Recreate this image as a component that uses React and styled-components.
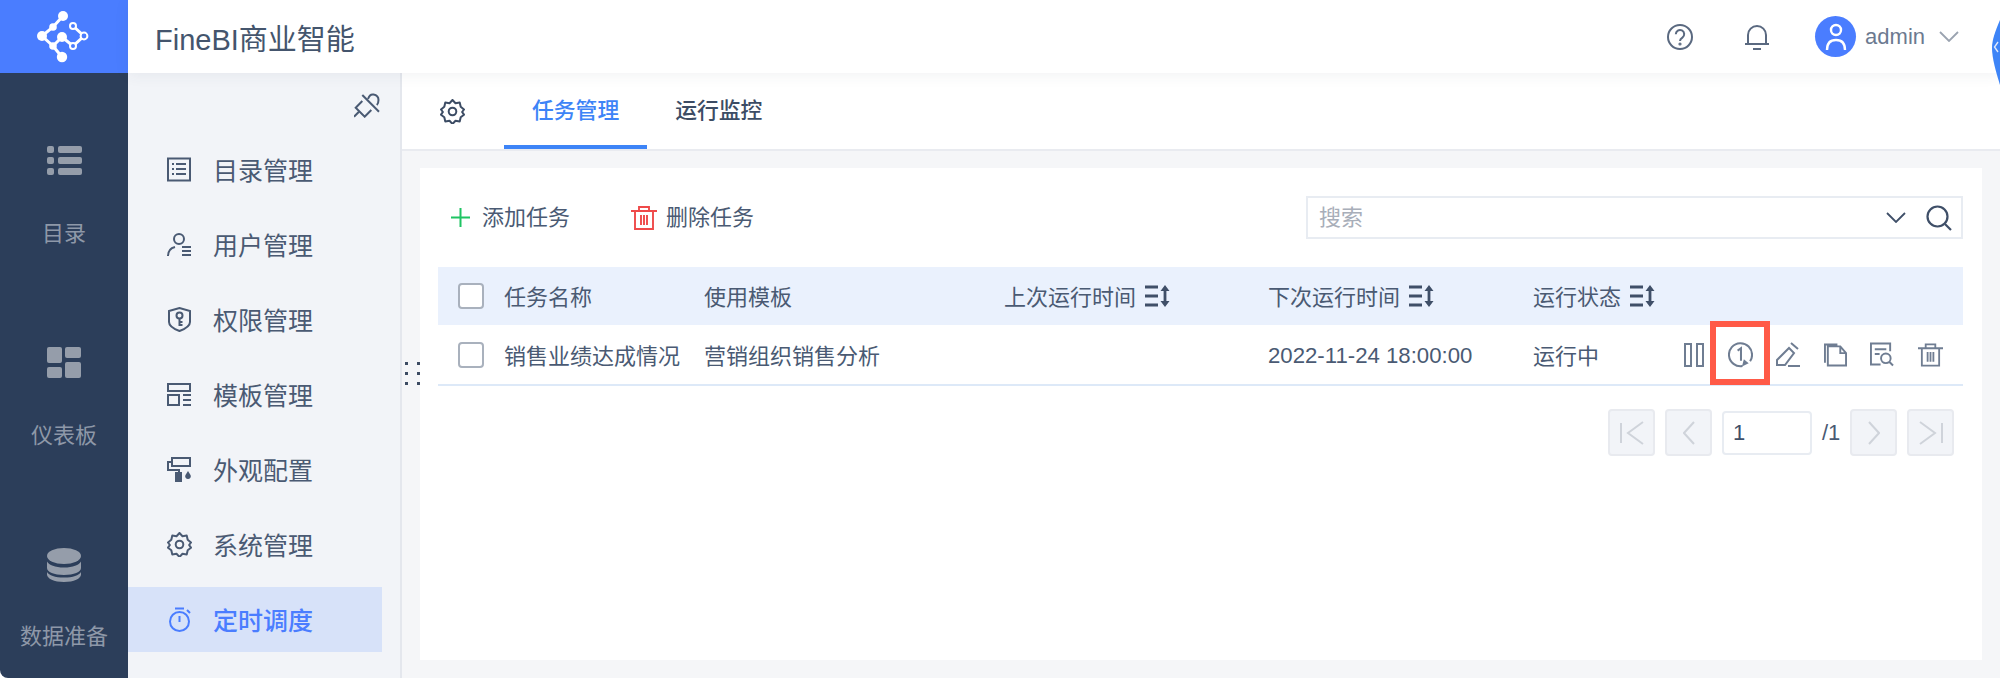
import React from "react";
import styled, { createGlobalStyle } from "styled-components";

const Global = createGlobalStyle`
  html, body { margin: 0; padding: 0; height: 100%; overflow: hidden; background: #fff; }
  body { font-family: "Liberation Sans", "Noto Sans CJK SC", sans-serif; color: #4a5a73; }
  #root { height: 100%; }
  * { box-sizing: border-box; }
  svg { display: block; flex: none; }
`;

const Page = styled.div`
  position: relative;
  width: 2000px;
  height: 678px;
  display: grid;
  grid-template-columns: 128px 1fr;
  grid-template-rows: 73px 1fr;
  overflow: hidden;
`;
const Logo = styled.div`background: #4a7dff;`;
const Header = styled.header`
  position: relative;
  z-index: 2;
  background: #fff;
  display: flex;
  align-items: center;
  padding: 0 41px 0 27px;
  box-shadow: 0 2px 14px rgba(60, 70, 90, 0.07);
`;
const Title = styled.div`font-size: 29px; color: #44556d; flex: 1;`;
const HeadIcons = styled.div`display: flex; align-items: center; gap: 51px;`;
const User = styled.div`display: flex; align-items: center; margin-left: 46px;`;
const Avatar = styled.div`
  width: 41px; height: 41px; border-radius: 50%; background: #4a7dff;
  display: flex; align-items: center; justify-content: center; margin-right: 9px;
`;
const UserName = styled.span`font-size: 22px; color: #6c7a90; margin-right: 14px;`;
const SideTab = styled.svg`position: absolute; right: 0; top: 20px; z-index: 3;`;

const Rail = styled.nav`
  background: #2c3e5a;
  border-bottom-left-radius: 8px;
  display: flex;
  flex-direction: column;
`;
const RailItem = styled.div`
  height: 201px;
  display: flex;
  flex-direction: column;
  align-items: center;
  padding-top: ${p => p.$top}px;
`;
const RailLabel = styled.div`
  font-size: 22px; line-height: 30px; color: #8e98a8; margin-top: ${p => p.$gap}px;
`;

const Body = styled.div`display: grid; grid-template-columns: 274px 1fr; min-height: 0;`;
const NavPanel = styled.aside`
  background: #f2f4f8;
  border-right: 2px solid #e4e7ed;
  padding-right: 18px;
  display: flex;
  flex-direction: column;
`;
const PinRow = styled.div`
  height: 64px; display: flex; justify-content: flex-end; padding: 19px 2px 0 0;
`;
const NavList = styled.div`display: flex; flex-direction: column; gap: 10px;`;
const NavItem = styled.div`
  height: 65px;
  display: flex;
  align-items: center;
  gap: 21px;
  padding-left: 39px;
  font-size: 25px;
  color: ${p => (p.$active ? "#4a7dff" : "#4a5a73")};
  font-weight: ${p => (p.$active ? 500 : 400)};
  background: ${p => (p.$active ? "#d7e2f9" : "transparent")};
`;
const NavText = styled.span`margin-bottom: 2px;`;

const Main = styled.main`
  position: relative;
  background: #f5f6f8;
  display: flex;
  flex-direction: column;
  padding-bottom: 18px;
`;
const Grip = styled.div`
  position: absolute; left: 3px; top: 289px;
  display: grid; grid-template-columns: repeat(2, 3px); gap: 7px 9px;
`;
const GripDot = styled.i`display: block; width: 3px; height: 3px; background: #3d4c63;`;
const Tabs = styled.div`
  height: 78px; background: #fff; border-bottom: 2px solid #e9ebf0;
  display: flex; align-items: center; padding-left: 38px;
`;
const TabList = styled.div`display: flex; align-self: stretch; margin-left: 39px;`;
const Tab = styled.div`
  font-size: 21.8px;
  font-weight: 500;
  padding: 0 28px 2px;
  display: flex;
  align-items: center;
  height: 76px;
  color: ${p => (p.$active ? "#3d84f7" : "#3c4c64")};
  border-bottom: 4px solid ${p => (p.$active ? "#3d84f7" : "transparent")};
`;
const Card = styled.section`
  flex: 1;
  margin: 17px 18px 0;
  background: #fff;
  padding: 0 19px 0 18px;
`;
const Toolbar = styled.div`
  height: 99px;
  display: flex;
  align-items: center;
  justify-content: space-between;
`;
const Actions = styled.div`display: flex; align-items: center;`;
const ToolButton = styled.div`
  display: flex; align-items: center; font-size: 22px; color: #4a5a73;
  gap: ${p => p.$gap}px; margin-left: ${p => p.$left}px;
`;
const ToolText = styled.span`margin-bottom: 5px;`;
const Search = styled.div`
  width: 657px; height: 43px; border: 2px solid #e8ecf2;
  display: flex; align-items: center; padding: 0 9px 0 11px;
  font-size: 22px; color: #a8aeb9;
`;
const SearchText = styled.span`flex: 1; margin-bottom: 6px;`;
const SearchChevron = styled.span`margin-right: 20px;`;

const Row = styled.div`
  display: grid;
  grid-template-columns: 66px 200px 300px 264px 265px 1fr;
  align-items: center;
  font-size: 22px;
  color: #4a5a73;
  height: ${p => p.$h}px;
  background: ${p => (p.$head ? "#eaf1fd" : "#fff")};
  border-bottom: ${p => (p.$head ? "none" : "2px solid #dde9f8")};
`;
const CheckCell = styled.div`padding-left: 20px;`;
const Check = styled.div`
  width: 26px; height: 26px; border: 2px solid #a9b1bd; border-radius: 4px; background: #fff;
`;
const CellText = styled.span`display: block; margin-bottom: 2px; white-space: nowrap;`;
const SortCell = styled.div`display: flex; align-items: center; gap: 9px; white-space: nowrap;`;
const DateText = styled.div`font-size: 22.2px; padding-top: 2px;`;
const StatusCell = styled.div`
  display: grid;
  grid-template-columns: auto 1fr;
  align-items: center;
`;
const RowActions = styled.div`
  display: flex; align-items: center; justify-content: flex-end; padding-right: 20px; gap: 23.6px;
`;
const ActionIcon = styled.span`position: relative; display: block;`;
const Highlight = styled.i`
  position: absolute; left: -18px; top: -21px; width: 60px; height: 64px;
  border: 6px solid #ff5a47; pointer-events: none;
`;
const Pager = styled.div`
  display: flex; justify-content: flex-end; align-items: center; gap: 10px;
  padding: 23px 9px 0 0;
`;
const PageButton = styled.div`
  width: 47px; height: 47px; background: #f2f4f8; border: 2px solid #e8eaef; border-radius: 4px;
  display: flex; align-items: center; justify-content: center;
`;
const PageInput = styled.div`
  width: 90px; height: 44px; border: 2px solid #e8ecf2; border-radius: 4px;
  font-size: 22px; color: #3f4f68; display: flex; align-items: center; padding-left: 9px;
`;
const PageTotal = styled.span`font-size: 22px; color: #4a5a73; width: 18px;`;

const INK = "#4a5a73";
const ACT = "#6f7d92";

const LogoMark = () => (
  <svg width="128" height="73" viewBox="0 0 128 73">
    <g stroke="#fff" strokeWidth="3" fill="none">
      <path d="M63 16L53 27L42 36L53 46L62 57M53 46L62 37L73 46L84 36L73 26" />
    </g>
    <g fill="#fff">
      <circle cx="63" cy="16" r="5" /><circle cx="53" cy="27" r="3.800" /><circle cx="42" cy="36" r="5" />
      <circle cx="53" cy="46" r="3.800" /><circle cx="62" cy="57" r="5.200" /><circle cx="62" cy="37" r="5" />
    </g>
    <g fill="#4a7dff" stroke="#fff" strokeWidth="2">
      <circle cx="73" cy="26" r="3" /><circle cx="84" cy="36" r="3.400" /><circle cx="73" cy="46" r="3" />
    </g>
  </svg>
);
const Help = () => (
  <svg width="28" height="28" viewBox="0 0 28 28" fill="none" stroke="#5a6980" strokeWidth="2">
    <circle cx="14" cy="14" r="12" />
    <path d="M9.800 11.200a4.200 4.200 0 1 1 6.600 3.400c-1.500 1-2.400 1.700-2.400 3.400" />
    <circle cx="14" cy="21" r=".6" fill="#5a6980" />
  </svg>
);
const Bell = () => (
  <svg width="24" height="26" viewBox="0 0 24 26" fill="none" stroke="#5a6980" strokeWidth="2">
    <path d="M3 19V11a9 9 0 0 1 18 0v8" />
    <path d="M0 20h24M8 25h8" />
  </svg>
);
const AvatarFace = () => (
  <svg width="22" height="28" viewBox="0 0 22 28" fill="none" stroke="#fff" strokeWidth="2.400">
    <circle cx="11" cy="7" r="5" />
    <path d="M2 27c0-7 3.500-10 9-10s9 3 9 10" />
  </svg>
);
const Chevron = ({ c = "#9aa3b0" }) => (
  <svg width="20" height="11" viewBox="0 0 20 11" fill="none" stroke={c} strokeWidth="1.800">
    <path d="M1 1l9 9 9-9" />
  </svg>
);
const RailList = () => (
  <svg width="35" height="30" viewBox="0 0 35 30" fill="#959daa">
    <rect x="0" y="0" width="7" height="7" rx="2" /><rect x="11" y="0" width="24" height="7" rx="2" />
    <rect x="0" y="11" width="7" height="7" rx="2" /><rect x="11" y="11" width="24" height="7" rx="2" />
    <rect x="0" y="22" width="7" height="7" rx="2" /><rect x="11" y="22" width="24" height="7" rx="2" />
  </svg>
);
const RailDash = () => (
  <svg width="34" height="31" viewBox="0 0 34 31" fill="#959daa">
    <rect x="0" y="0" width="15" height="16" rx="2" /><rect x="18" y="0" width="16" height="11" rx="2" />
    <rect x="0" y="20" width="15" height="11" rx="2" /><rect x="18" y="15" width="16" height="16" rx="2" />
  </svg>
);
const RailDb = () => (
  <svg width="34" height="34" viewBox="0 0 34 34" fill="#959daa">
    <ellipse cx="17" cy="8" rx="17" ry="8" />
    <path d="M0 13.500c2 3.500 8 6 17 6s15-2.500 17-6V20c0 4-7 7-17 7S0 24 0 20z" />
    <path d="M0 24c2 3.500 8 5.500 17 5.500S32 27.500 34 24v2.500C34 30.500 27 34 17 34S0 30.500 0 26.500z" />
  </svg>
);
const Pin = () => (
  <svg width="26" height="26" viewBox="0 0 26 26" fill="none" stroke={INK} strokeWidth="2">
    <path d="M8.300 3L25 19.700" />
    <path d="M14 7c1-3 3-5 5.500-4.500 3 .6 5 3 5 5.500 0 2-.7 4-1.700 5" />
    <path d="M8.300 9L1.700 15.700 10.700 24.700 17.300 18" />
    <path d="M5 19.700L0 24.700" />
  </svg>
);
const NavIcon = ({ children }) => (
  <svg width="25" height="25" viewBox="0 0 25 25" fill="none" stroke="currentColor" strokeWidth="2">{children}</svg>
);
const GEAR = "M12.500 1l3 3.200 4.200-.6 1 4.200 3.300 2.700-1.900 2.500 1.900 2.700-3.300 2.500-1 4.200-4.200-.6-3 3.200-3-3.200-4.200.6-1-4.200L1 15.700 2.900 13 1 10.500l3.300-2.700 1-4.200 4.200.6z";
const navIcons = [
  <NavIcon key="a"><rect x="1" y="1.500" width="22" height="22" /><path d="M5 7h2M9 7h10M5 12h2M9 12h10M5 17h2M9 17h10" /></NavIcon>,
  <NavIcon key="b"><circle cx="12" cy="7" r="5" /><path d="M1 24c0-5 3-8 7-9M15 15h9M15 19h9M15 23h9" /></NavIcon>,
  <NavIcon key="c"><path d="M2 4l10.500-3L23 4v11c0 4-5 7-10.500 9C7 22 2 19 2 15z" /><circle cx="12.500" cy="8.500" r="3" /><path d="M12.500 11.500V19M12.500 15h3M12.500 18h3" /></NavIcon>,
  <NavIcon key="d"><path d="M1 2h22v7H1zM1 13h11v10H1zM16 13h8M16 18h8M16 23h8" /></NavIcon>,
  <NavIcon key="e"><path d="M5 5H1v8h11v3M5 1h18v8H5z" /><rect x="9" y="16" width="5" height="9" fill="currentColor" /><path d="M21 14l2.500 4a2.800 2.800 0 1 1-5 0z" fill="currentColor" stroke="none" /></NavIcon>,
  <NavIcon key="f"><path d={GEAR} strokeLinejoin="round" /><circle cx="12.500" cy="12.500" r="3.800" /></NavIcon>,
  <NavIcon key="g"><circle cx="12.500" cy="14.500" r="9.500" /><path d="M8 1.500h9M12.500 9v6M20 3l3 3" /></NavIcon>,
];
const Gear = () => (
  <svg width="25" height="25" viewBox="0 0 25 25" fill="none" stroke="#3c4c64" strokeWidth="2" strokeLinejoin="round">
    <path d={GEAR} />
    <circle cx="12.500" cy="12.500" r="3.800" />
  </svg>
);
const Plus = () => (
  <svg width="19" height="19" viewBox="0 0 19 19" stroke="#1fc463" strokeWidth="2"><path d="M9.500 0v19M0 9.500h19" /></svg>
);
const Trash = ({ c, w = 26, h = 24 }) => (
  <svg width={w} height={h} viewBox="0 0 26 24" fill="none" stroke={c} strokeWidth="1.900">
    <path d="M0 5h26M8 5V1h10v4M4 5v18h18V5M10 9v10M13 9v10M16 9v10" />
  </svg>
);
const SearchIcon = () => (
  <svg width="26" height="26" viewBox="0 0 26 26" fill="none" stroke="#3f4f68" strokeWidth="2.200">
    <circle cx="11.500" cy="11.500" r="10" /><path d="M19 19l6 6" />
  </svg>
);
const Sort = () => (
  <svg width="25" height="22" viewBox="0 0 25 22" fill="none" stroke="#3f4f68" strokeWidth="2.800">
    <path d="M0 2h13M0 11h13M0 20h13M20 4v14" />
    <path d="M15.500 6l4.500-6 4.500 6zM15.500 16l4.500 6 4.500-6z" fill="#3f4f68" stroke="none" />
  </svg>
);
const Pause = () => (
  <svg width="20" height="24" viewBox="0 0 20 24" fill="none" stroke={ACT} strokeWidth="2"><rect x="1" y="1" width="6" height="22" /><rect x="13" y="1" width="6" height="22" /></svg>
);
const Once = () => (
  <svg width="25" height="26" viewBox="0 0 26 26" fill="none" stroke={ACT} strokeWidth="2.100">
    <path d="M15 24.500A12 12 0 1 1 25 13c0 2.500-.6 4.500-2 6.500" />
    <path d="M10 8.500L13.500 6v13" />
    <path d="M14.500 25l2-7.500 5 4z" fill={ACT} stroke="none" />
  </svg>
);
const Edit = () => (
  <svg width="24" height="25" viewBox="0 0 24 25" fill="none" stroke={ACT} strokeWidth="2">
    <path d="M1 18l12-12 5 5-9 12H1zM15 1l7 6M12 24h12" />
  </svg>
);
const Copy = () => (
  <svg width="23" height="24" viewBox="0 0 24 24" fill="none" stroke={ACT} strokeWidth="2">
    <path d="M4 3v20h19V10l-6-7zM17 3v7h6M1 20V1h13" />
  </svg>
);
const Review = () => (
  <svg width="24" height="25" viewBox="0 0 25 25" fill="none" stroke={ACT} strokeWidth="2">
    <path d="M21 9V1H1v22h10M5 7h12M5 12h5" />
    <circle cx="16.500" cy="16.500" r="5" /><path d="M20 20l4 4" />
  </svg>
);
const First = () => (
  <svg width="24" height="24" viewBox="0 0 24 24" fill="none" stroke="#cfd3da" strokeWidth="2"><path d="M1 2v20M23 1L8 12l15 11" /></svg>
);
const Last = () => (
  <svg width="24" height="24" viewBox="0 0 24 24" fill="none" stroke="#cfd3da" strokeWidth="2"><path d="M23 2v20M1 1l15 11L1 23" /></svg>
);
const Prev = () => (
  <svg width="12" height="24" viewBox="0 0 12 24" fill="none" stroke="#cfd3da" strokeWidth="2"><path d="M11 1L1 12l10 11" /></svg>
);
const Next = () => (
  <svg width="12" height="24" viewBox="0 0 12 24" fill="none" stroke="#cfd3da" strokeWidth="2"><path d="M1 1l10 11L1 23" /></svg>
);

const navs = ["目录管理", "用户管理", "权限管理", "模板管理", "外观配置", "系统管理", "定时调度"];

export default function App() {
  return (
    <Page>
      <Global />
      <Logo><LogoMark /></Logo>
      <Header>
        <Title>FineBI商业智能</Title>
        <HeadIcons>
          <Help />
          <Bell />
        </HeadIcons>
        <User>
          <Avatar><AvatarFace /></Avatar>
          <UserName>admin</UserName>
          <Chevron />
        </User>
      </Header>
      <SideTab width="10" height="70" viewBox="0 0 10 70">
        <path d="M10 0C5 12 2 20 2 28c0 10 4 24 8 37z" fill="#3d84f7" />
        <path d="M8 22l-3.500 5 3.500 5" stroke="#dfe9fb" strokeWidth="1.400" fill="none" />
      </SideTab>
      <Rail>
        <RailItem $top={73}><RailList /><RailLabel $gap={43}>目录</RailLabel></RailItem>
        <RailItem $top={73}><RailDash /><RailLabel $gap={43}>仪表板</RailLabel></RailItem>
        <RailItem $top={73}><RailDb /><RailLabel $gap={40}>数据准备</RailLabel></RailItem>
      </Rail>
      <Body>
        <NavPanel>
          <PinRow><Pin /></PinRow>
          <NavList>
            {navs.map((n, i) => (
              <NavItem key={n} $active={i === 6}>{navIcons[i]}<NavText>{n}</NavText></NavItem>
            ))}
          </NavList>
        </NavPanel>
        <Main>
          <Grip>{Array.from({ length: 6 }, (_, i) => <GripDot key={i} />)}</Grip>
          <Tabs>
            <Gear />
            <TabList>
              <Tab $active>任务管理</Tab>
              <Tab>运行监控</Tab>
            </TabList>
          </Tabs>
          <Card>
            <Toolbar>
              <Actions>
                <ToolButton $gap={12} $left={13}><Plus /><ToolText>添加任务</ToolText></ToolButton>
                <ToolButton $gap={9} $left={61}><Trash c="#ef4a4a" /><ToolText>删除任务</ToolText></ToolButton>
              </Actions>
              <Search>
                <SearchText>搜索</SearchText>
                <SearchChevron><Chevron c="#3f4f68" /></SearchChevron>
                <SearchIcon />
              </Search>
            </Toolbar>
            <Row $head $h={58}>
              <CheckCell><Check /></CheckCell>
              <CellText>任务名称</CellText>
              <CellText>使用模板</CellText>
              <SortCell><CellText>上次运行时间</CellText><Sort /></SortCell>
              <SortCell><CellText>下次运行时间</CellText><Sort /></SortCell>
              <SortCell><CellText>运行状态</CellText><Sort /></SortCell>
            </Row>
            <Row $h={61}>
              <CheckCell><Check /></CheckCell>
              <CellText>销售业绩达成情况</CellText>
              <CellText>营销组织销售分析</CellText>
              <div />
              <DateText>2022-11-24 18:00:00</DateText>
              <StatusCell>
                <CellText>运行中</CellText>
                <RowActions>
                  <ActionIcon><Pause /></ActionIcon>
                  <ActionIcon><Once /><Highlight /></ActionIcon>
                  <ActionIcon><Edit /></ActionIcon>
                  <ActionIcon><Copy /></ActionIcon>
                  <ActionIcon><Review /></ActionIcon>
                  <ActionIcon><Trash c={ACT} w={25} h={24} /></ActionIcon>
                </RowActions>
              </StatusCell>
            </Row>
            <Pager>
              <PageButton><First /></PageButton>
              <PageButton><Prev /></PageButton>
              <PageInput>1</PageInput>
              <PageTotal>/1</PageTotal>
              <PageButton><Next /></PageButton>
              <PageButton><Last /></PageButton>
            </Pager>
          </Card>
        </Main>
      </Body>
    </Page>
  );
}
